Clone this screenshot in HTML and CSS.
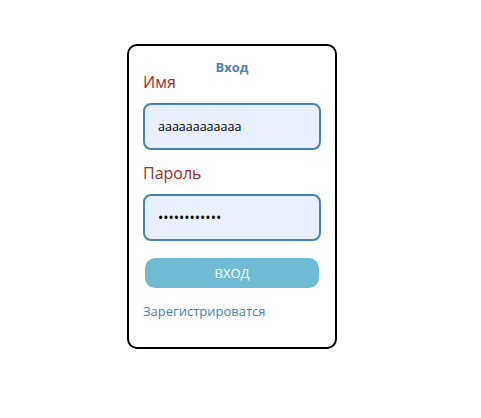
FILE: index.html
```html
<!DOCTYPE html>
<html lang="ru">
<head>
    <meta charset="UTF-8">
    <title>Вход</title>
    <link rel="stylesheet" href="styles.css">
</head>
<body>
    <div class="page">
        <form class="login-card">
            <h3 class="login-title">Вход</h3>
            <label class="field-label" for="name">Имя</label>
            <input class="field-input" type="text" id="name" value="аааааааааааа">
            <label class="field-label" for="password">Пароль</label>
            <input class="field-input password" type="password" id="password" value="aaaaaaaaaaaa">
            <button class="login-button" type="button">ВХОД</button>
            <a class="register-link" href="#">Зарегистрироватся</a>
        </form>
    </div>
</body>
</html>
```

FILE: styles.css
```css
body {
    margin: 0;
    font-family: "Open Sans", "Noto Sans", sans-serif;
    background-color: #ffffff;
}
.page {
    padding: 44px 0 0 127px;
}
.login-card {
    width: 210px;
    height: 305px;
    box-sizing: border-box;
    border: 2px solid #000000;
    border-radius: 10px;
    padding: 15px 14px 14px;
    display: flex;
    flex-direction: column;
}
.login-title {
    margin: 0;
    text-align: center;
    font-size: 13px;
    line-height: 12px;
    font-weight: bold;
    color: #4682b4;
}
.field-label {
    font-size: 16px;
    line-height: 20px;
    margin-top: -1px;
    color: #a52a2a;
    margin-bottom: 11px;
}
.field-input {
    height: 47px;
    box-sizing: border-box;
    border: 2px solid #4682b4;
    border-radius: 8px;
    background-color: #e8f0fe;
    padding: 0 13px;
    font-family: inherit;
    font-size: 12.5px;
    color: #000000;
    margin-bottom: 14px;
}
.field-input.password {
    font-size: 14px;
}
.login-button {
    margin: 3px 2px 0;
    height: 30px;
    border: none;
    border-radius: 10px;
    background-color: #6fbbd3;
    color: #ffffff;
    font-family: inherit;
    font-size: 13px;
}
.register-link {
    margin-top: 14px;
    font-size: 13px;
    color: #4682b4;
    text-decoration: none;
}
```
